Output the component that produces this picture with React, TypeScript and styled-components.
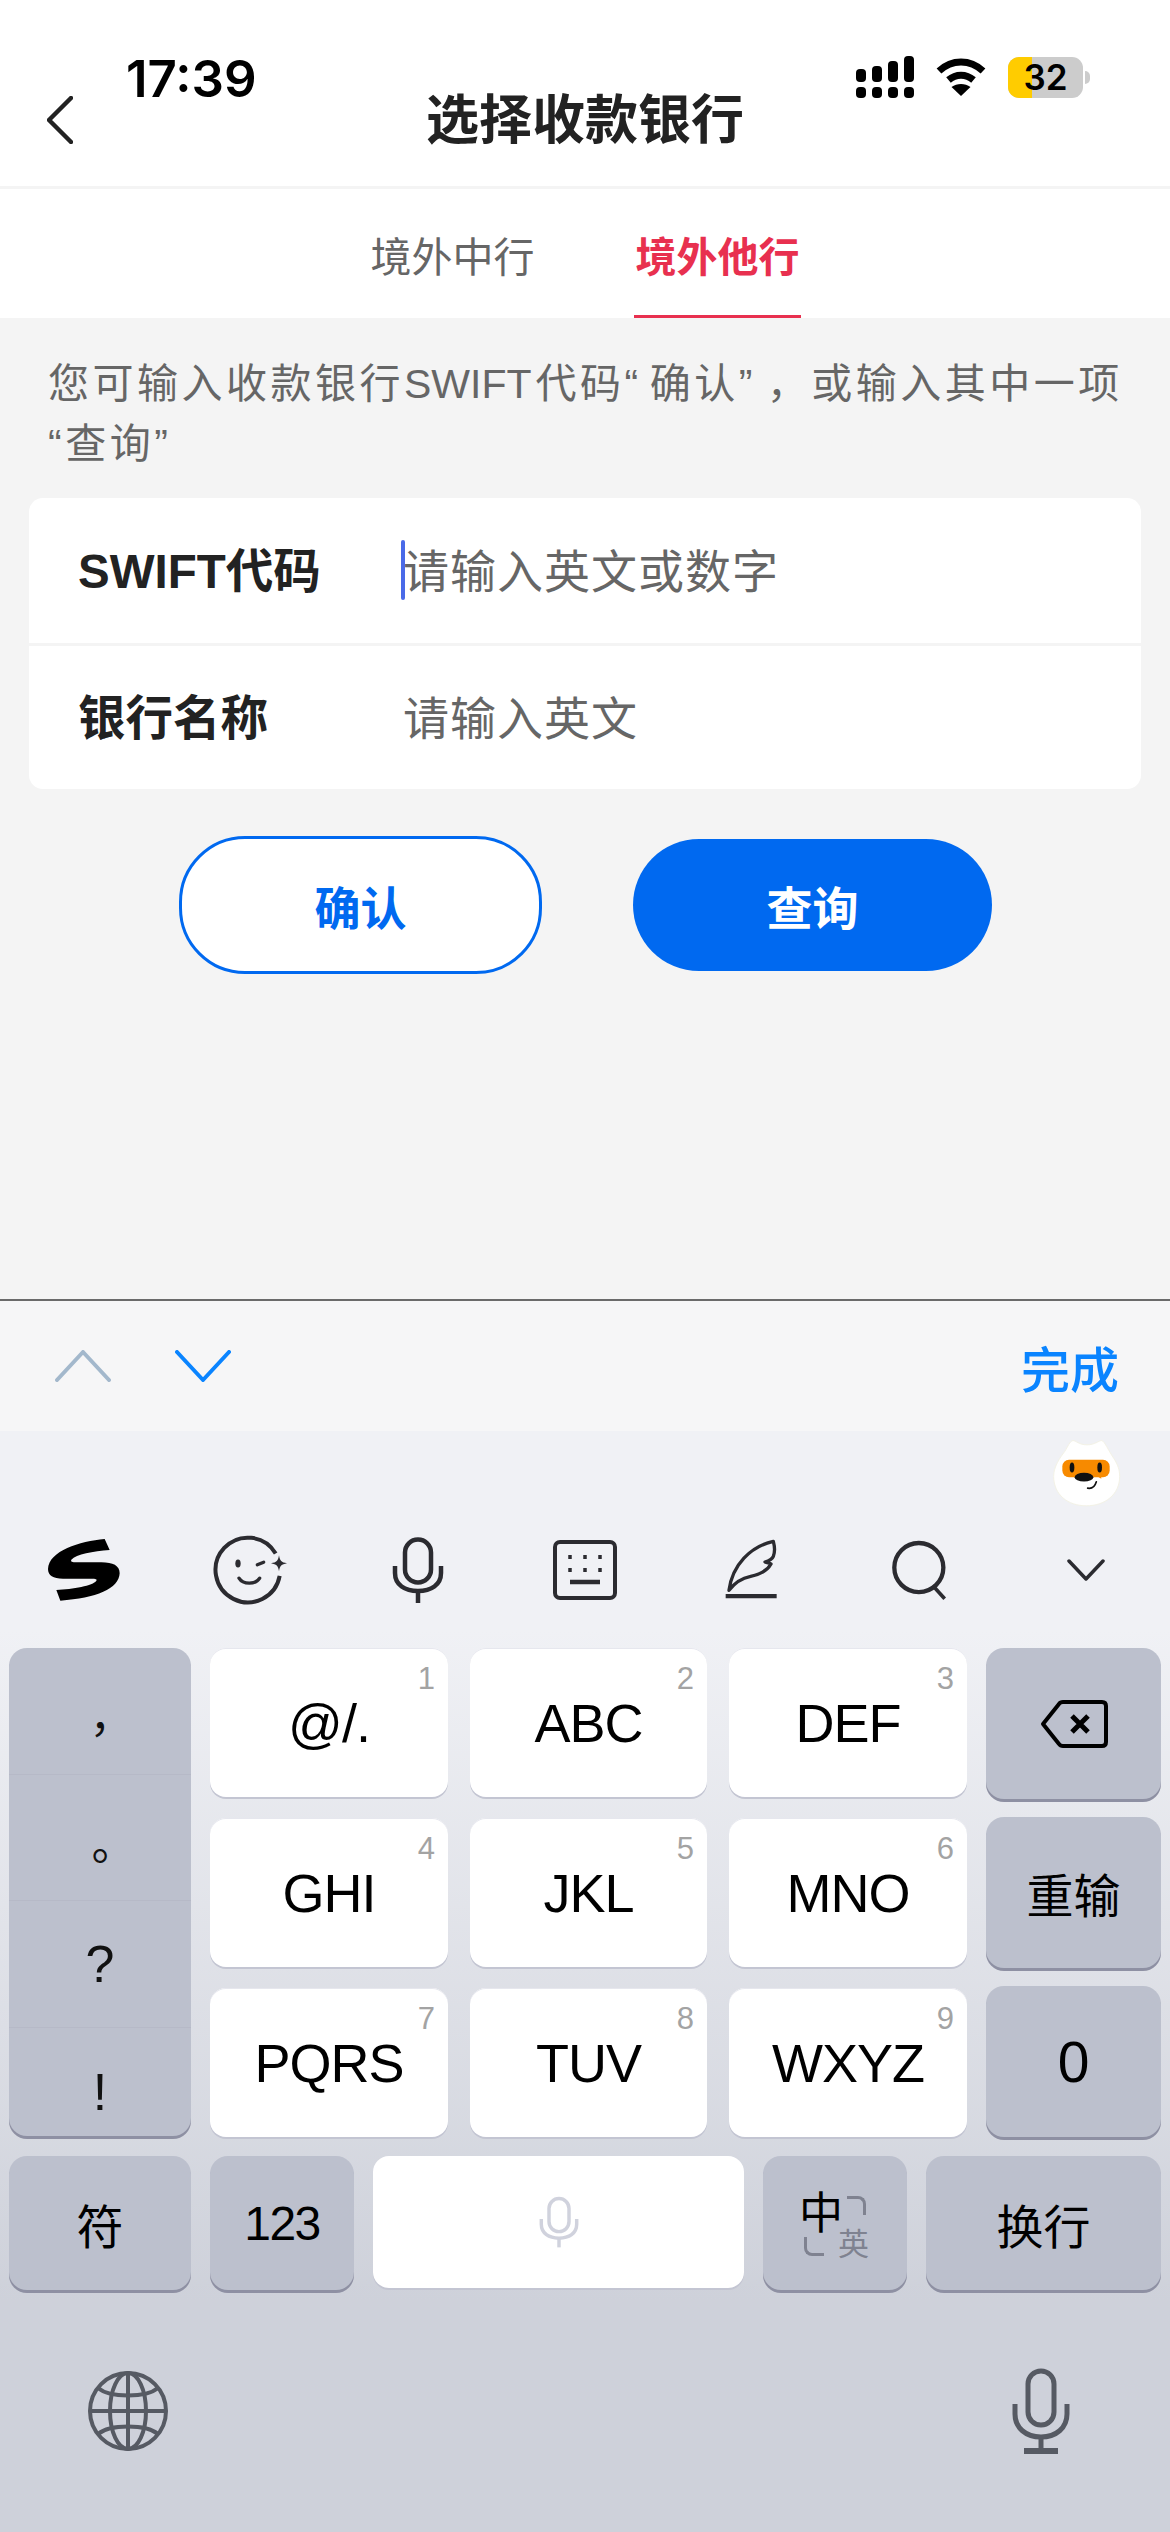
import styled, { createGlobalStyle } from 'styled-components';

const CJK = `"Noto Sans CJK SC", sans-serif`;
const LATIN = `"Liberation Sans", "Noto Sans CJK SC", sans-serif`;

const GlobalStyle = createGlobalStyle`
  html, body {
    margin: 0;
    padding: 0;
    background: #fff;
  }
`;

const StatusIcons = () => (
  <StatusRight>
    <svg width="58" height="42" viewBox="0 0 58 42" fill="#000">
      <rect x="0" y="31" width="10" height="11" rx="4" />
      <rect x="16" y="31" width="10" height="11" rx="4" />
      <rect x="32" y="31" width="10" height="11" rx="4" />
      <rect x="48" y="31" width="10" height="11" rx="4" />
      <rect x="0" y="13" width="10" height="13" rx="4" />
      <rect x="16" y="10" width="10" height="16" rx="4" />
      <rect x="32" y="5" width="10" height="21" rx="4" />
      <rect x="48" y="0" width="10" height="26" rx="4" />
    </svg>
    <svg width="50" height="40" viewBox="0 0 50 40">
      <path d="M3 14C16 2 34 2 47 14" fill="none" stroke="#000" strokeWidth="7" />
      <path d="M12.500 23C20 16.500 30 16.500 37.500 23" fill="none" stroke="#000" strokeWidth="7" />
      <path d="M25 39L15.500 30C21 26 29 26 34.500 30Z" fill="#000" />
    </svg>
    <Battery>
      <BatteryFill />
      <BatteryLevel>32</BatteryLevel>
      <BatteryNub />
    </Battery>
  </StatusRight>
);

const Chevron = ({ dir, color, w, h, stroke }: { dir: 'up' | 'down' | 'left'; color: string; w: number; h: number; stroke: number }) => {
  const d =
    dir === 'up'
      ? `M2 ${h - 2}L${w / 2} 2L${w - 2} ${h - 2}`
      : dir === 'down'
        ? `M2 2L${w / 2} ${h - 2}L${w - 2} 2`
        : `M${w - 2} 2L2 ${h / 2}L${w - 2} ${h - 2}`;
  return (
    <svg width={w} height={h} viewBox={`0 0 ${w} ${h}`}>
      <path d={d} fill="none" stroke={color} strokeWidth={stroke} strokeLinecap="round" strokeLinejoin="round" />
    </svg>
  );
};

const MicIcon = ({ color, w, h }: { color: string; w: number; h: number }) => (
  <svg width={w} height={h} viewBox="0 0 52 66" fill="none" stroke={color} strokeWidth="4.500">
    <rect x="13" y="2.500" width="26" height="43" rx="13" />
    <path d="M3 29V36C3 48 13 54 26 54C39 54 49 48 49 36V29" />
    <path d="M26 54V66" />
  </svg>
);

const Mascot = () => (
  <svg width="68" height="69" viewBox="40 25 204 206">
    <path d="M100 32C108 32 118 45 142 45C165 45 178 32 186 32C195 34 205 60 222 85C235 105 240 120 240 140C240 195 195 228 140 228C85 228 42 195 42 140C42 110 60 85 75 65C85 50 90 34 100 32Z" fill="#fff" stroke="#f3f2e6" strokeWidth="3" />
    <rect x="68" y="90" width="142" height="52" rx="20" fill="#f78a00" />
    <path d="M165 135L185 147L183 125Z" fill="#f78a00" />
    <ellipse cx="97" cy="113" rx="7" ry="15" fill="#111" />
    <ellipse cx="180" cy="113" rx="7" ry="15" fill="#111" />
    <ellipse cx="133" cy="142" rx="28" ry="13" fill="#111" />
    <path d="M144 175C156 177 166 170 170 156" fill="none" stroke="#111" strokeWidth="5" strokeLinecap="round" />
  </svg>
);

const tools = [
  <svg key="s" width="72" height="62" viewBox="55 55 216 186">
    <path d="M225 55L240 88C190 92 140 100 125 117C122 123 128 125 140 125H215C250 125 270 135 270 158C268 205 200 232 92 240L80 208C130 205 190 195 200 180C203 175 198 174 185 174H100C70 174 55 165 55 145C58 90 150 62 225 55Z" fill="#000" />
  </svg>,
  <svg key="smile" width="75" height="72" viewBox="550 40 225 215" fill="none" stroke="#2b2b30" strokeWidth="12">
    <path d="M738 98A97 97 0 1 0 750 165" />
    <ellipse cx="625" cy="128" rx="8" ry="12" fill="#2b2b30" stroke="none" />
    <path d="M683 132L702 124" strokeWidth="10" strokeLinecap="round" />
    <path d="M628 172C640 192 678 192 690 172" strokeWidth="10" strokeLinecap="round" />
    <path d="M748 103C751 120 755 124 772 127C755 130 751 134 748 151C745 134 741 130 724 127C741 124 745 120 748 103Z" fill="#2b2b30" stroke="none" />
  </svg>,
  <MicIcon key="mic" color="#2b2b30" w={52} h={66} />,
  <svg key="kb" width="64" height="60" viewBox="0 0 64 60" fill="none" stroke="#2b2b30">
    <rect x="2" y="2" width="60" height="56" rx="5" strokeWidth="4" />
    <path d="M17 15V19M32 15V19M47 15V19M17 28V32M32 28V32M47 28V32" strokeWidth="3.500" />
    <path d="M17 42H47" strokeWidth="4.500" />
  </svg>,
  <svg key="pen" width="55" height="65" viewBox="70 50 165 195" fill="none" stroke="#2b2b30">
    <path d="M85 207C95 130 150 75 218 60C222 75 224 90 218 105C214 115 205 118 193 122C200 125 208 125 211 128C200 148 175 160 150 165C125 170 105 180 85 207Z" strokeWidth="10" strokeLinejoin="round" />
    <path d="M75 224.500H228" strokeWidth="13" />
  </svg>,
  <svg key="search" width="58" height="63" viewBox="565 50 175 190" fill="none" stroke="#2b2b30" strokeWidth="13">
    <circle cx="652" cy="136" r="74" />
    <path d="M700 197L730 230" strokeWidth="11" />
  </svg>,
  <Chevron key="down" dir="down" color="#2b2b30" w={38} h={22} stroke={3.500} />,
];

const t9 = [
  ['@/.', '1'],
  ['ABC', '2'],
  ['DEF', '3'],
  ['GHI', '4'],
  ['JKL', '5'],
  ['MNO', '6'],
  ['PQRS', '7'],
  ['TUV', '8'],
  ['WXYZ', '9'],
];

export default function App() {
  return (
    <Page>
      <GlobalStyle />
      <Header>
        <Time>17:39</Time>
        <StatusIcons />
        <BackButton>
          <Chevron dir="left" color="#222" w={26} h={48} stroke={4.500} />
        </BackButton>
        <Title>选择收款银行</Title>
      </Header>
      <Tabs>
        <Tab>境外中行</Tab>
        <Tab $active>境外他行</Tab>
      </Tabs>
      <Content>
        <Hint>
          您可输入收款银行<HintCode>SWIFT</HintCode>代码<HintQuote $after={8}>“</HintQuote>确认<HintQuote $after={11}>”</HintQuote>，或输入其中一项
          <br />
          “查询”
        </Hint>
        <FormCard>
          <FormRow>
            <FieldLabel>SWIFT代码</FieldLabel>
            <Placeholder $focused>请输入英文或数字</Placeholder>
          </FormRow>
          <FormRow>
            <FieldLabel>银行名称</FieldLabel>
            <Placeholder>请输入英文</Placeholder>
          </FormRow>
        </FormCard>
        <Actions>
          <OutlineButton>确认</OutlineButton>
          <SolidButton>查询</SolidButton>
        </Actions>
      </Content>
      <Toolbar>
        <Arrows>
          <Chevron dir="up" color="#a3b8cc" w={56} h={32} stroke={4} />
          <Chevron dir="down" color="#0a84ff" w={56} h={32} stroke={4} />
        </Arrows>
        <Done>完成</Done>
      </Toolbar>
      <Keyboard>
        <MascotRow>
          <Mascot />
        </MascotRow>
        <ToolRow>
          {tools.map((icon, i) => (
            <ToolCell key={i}>{icon}</ToolCell>
          ))}
        </ToolRow>
        <KeyBlock>
          <SymbolKey>
            <SymbolCell $top={32}>，</SymbolCell>
            <SymbolCell $top={32}>。</SymbolCell>
            <SymbolCell $latin>?</SymbolCell>
            <SymbolCell $latin $last $top={20}>!</SymbolCell>
          </SymbolKey>
          <LetterGrid>
            {t9.map(([label, digit]) => (
              <LetterKey key={digit}>
                {label}
                <Digit>{digit}</Digit>
              </LetterKey>
            ))}
          </LetterGrid>
          <ActionColumn>
            <GreyKey>
              <svg width="68" height="48" viewBox="0 0 68 48" fill="none" stroke="#000">
                <path d="M3 24L19 4C20 2.500 21 2 23 2H62C64.500 2 66 3.500 66 6V42C66 44.500 64.500 46 62 46H23C21 46 20 45.500 19 44Z" strokeWidth="4" strokeLinejoin="round" />
                <path d="M32 16L48 32M48 16L32 32" strokeWidth="5" />
              </svg>
            </GreyKey>
            <GreyKey $cjk>重输</GreyKey>
            <GreyKey $big>0</GreyKey>
          </ActionColumn>
        </KeyBlock>
        <BottomKeys>
          <GreyKey $w={182} $cjk>符</GreyKey>
          <NumberKey>123</NumberKey>
          <SpaceKey>
            <MicIcon color="#d0d2dd" w={40} h={52} />
          </SpaceKey>
          <LangKey>
            <LangMain>中</LangMain>
            <LangCornerTop />
            <LangCornerBottom />
            <LangAlt>英</LangAlt>
          </LangKey>
          <GreyKey $w={235} $cjk>换行</GreyKey>
        </BottomKeys>
        <SystemRow>
          <svg width="80" height="80" viewBox="0 0 80 80" fill="none" stroke="#565a63" strokeWidth="4">
            <circle cx="40" cy="40" r="38" />
            <ellipse cx="40" cy="40" rx="18" ry="38" />
            <path d="M40 2V78M2 40H78" />
            <path d="M10 17C22 27 58 27 70 17M10 63C22 53 58 53 70 63" />
          </svg>
          <svg width="58" height="86" viewBox="0 0 58 86" fill="none" stroke="#565a63" strokeWidth="5">
            <rect x="16" y="3" width="26" height="54" rx="13" />
            <path d="M3 36V46C3 60 14 69 29 69C44 69 55 60 55 46V36" />
            <path d="M29 69V82" />
            <path d="M12 83H46" strokeWidth="6" />
          </svg>
        </SystemRow>
      </Keyboard>
    </Page>
  );
}

const Page = styled.div`
  width: 1170px;
  height: 2532px;
  display: flex;
  flex-direction: column;
  overflow: hidden;
  background: #f4f4f4;
  font-family: ${CJK};
`;

const Header = styled.header`
  position: relative;
  height: 186px;
  flex-shrink: 0;
  background: #fff;
  display: flex;
  align-items: flex-start;
  justify-content: center;
  padding-top: 77px;
  box-sizing: border-box;
`;

const Time = styled.div`
  position: absolute;
  left: 126px;
  top: 47px;
  font-family: Inter, ${LATIN};
  font-size: 51px;
  line-height: 64px;
  font-weight: 600;
  color: #000;
`;

const StatusRight = styled.div`
  position: absolute;
  left: 856px;
  top: 56px;
  display: flex;
  align-items: center;
  gap: 22px;
`;

const Battery = styled.div`
  position: relative;
  width: 75px;
  height: 41px;
  border-radius: 11px;
  background: #cccccc;
  display: flex;
  align-items: center;
  justify-content: center;
`;

const BatteryFill = styled.div`
  position: absolute;
  left: 0;
  top: 0;
  bottom: 0;
  width: 24px;
  background: #ffcc00;
  border-radius: 11px 0 0 11px;
`;

const BatteryLevel = styled.span`
  position: relative;
  font-family: Inter, ${LATIN};
  font-size: 35px;
  font-weight: 600;
  color: #000;
`;

const BatteryNub = styled.div`
  position: absolute;
  right: -7px;
  top: 14px;
  width: 5px;
  height: 13px;
  border-radius: 0 6px 6px 0;
  background: #cccccc;
`;

const BackButton = styled.div`
  position: absolute;
  left: 47px;
  top: 96px;
`;

const Title = styled.h1`
  margin: 0;
  font-size: 53px;
  line-height: 78px;
  font-weight: 700;
  color: #222;
`;

const Tabs = styled.nav`
  margin-top: 3px;
  height: 129px;
  flex-shrink: 0;
  background: #fff;
  display: flex;
  justify-content: center;
  gap: 98px;
`;

const Tab = styled.div<{ $active?: boolean }>`
  height: 129px;
  box-sizing: border-box;
  width: 167px;
  text-align: center;
  line-height: 130px;
  font-size: 41px;
  font-weight: ${(p) => (p.$active ? 700 : 400)};
  color: ${(p) => (p.$active ? '#e8304f' : '#666')};
  border-bottom: 3px solid ${(p) => (p.$active ? '#e8304f' : 'transparent')};
`;

const Content = styled.main`
  flex: 1;
  min-height: 0;
  padding: 36px 29px 0;
`;

const Hint = styled.p`
  margin: 0 0 24px;
  padding: 0 10px 0 19px;
  font-family: ${LATIN};
  font-size: 41px;
  line-height: 60px;
  letter-spacing: 3.5px;
  color: #666;
`;

const HintCode = styled.span`
  letter-spacing: 0;
  margin-right: 4px;
`;

const HintQuote = styled.span<{ $after: number }>`
  margin-right: ${(p) => p.$after}px;
`;

const FormCard = styled.section`
  background: #fff;
  border-radius: 14px;
  overflow: hidden;
`;

const FormRow = styled.div`
  height: 145px;
  display: flex;
  align-items: center;
  padding: 0 0 6px 49px;
  box-sizing: border-box;
  & + & {
    height: 146px;
    border-top: 3px solid #f4f4f4;
  }
`;

const FieldLabel = styled.div`
  width: 325px;
  font-family: ${LATIN};
  font-size: 47.5px;
  font-weight: 700;
  color: #222;
`;

const Placeholder = styled.div<{ $focused?: boolean }>`
  position: relative;
  font-size: 46px;
  letter-spacing: 1px;
  color: #666;
  &::before {
    content: '';
    display: ${(p) => (p.$focused ? 'block' : 'none')};
    position: absolute;
    left: -2px;
    top: 5px;
    width: 4px;
    height: 60px;
    border-radius: 2px;
    background: #4a6ae8;
  }
`;

const Actions = styled.div`
  margin-top: 47px;
  display: flex;
  align-items: center;
  gap: 91px;
  padding-left: 150px;
`;

const OutlineButton = styled.button`
  width: 363px;
  height: 138px;
  padding: 0;
  border: 3px solid #0069f0;
  border-radius: 66px;
  background: #fff;
  color: #0069f0;
  font-family: ${CJK};
  font-size: 46px;
  font-weight: 700;
`;

const SolidButton = styled.button`
  width: 359px;
  height: 132px;
  padding: 0;
  border: 0;
  border-radius: 66px;
  background: #0069f0;
  color: #fff;
  font-family: ${CJK};
  font-size: 46px;
  font-weight: 700;
`;

const Toolbar = styled.div`
  height: 132px;
  flex-shrink: 0;
  box-sizing: border-box;
  border-top: 2px solid #6a6a6a;
  background: #f6f6f7;
  display: flex;
  align-items: center;
  justify-content: space-between;
  padding: 0 51px 0 55px;
`;

const Arrows = styled.div`
  display: flex;
  gap: 64px;
`;

const Done = styled.div`
  font-size: 49px;
  font-weight: 500;
  color: #0a84ff;
`;

const Keyboard = styled.div`
  height: 1101px;
  flex-shrink: 0;
  display: flex;
  flex-direction: column;
  background: linear-gradient(to bottom, #f0f1f5 0, #f0f1f5 200px, #ced1da 870px);
`;

const MascotRow = styled.div`
  height: 78px;
  padding: 7px 49px 0 0;
  box-sizing: border-box;
  display: flex;
  justify-content: flex-end;
`;

const ToolRow = styled.div`
  height: 139px;
  display: grid;
  grid-template-columns: repeat(7, 167px);
`;

const ToolCell = styled.div`
  display: flex;
  justify-content: center;
  align-items: center;
  height: 70px;
  padding-top: 26px;
`;

const KeyBlock = styled.div`
  display: flex;
  gap: 19px;
  padding-left: 9px;
`;

const SymbolKey = styled.div`
  width: 182px;
  height: 488px;
  border-radius: 18px;
  background: #bcc0cd;
  box-shadow: 0 3px 0 #8e90a3;
  display: grid;
  grid-template-rows: 127px 126px 127px 108px;
`;

const SymbolCell = styled.div<{ $top?: number; $latin?: boolean; $last?: boolean }>`
  display: flex;
  align-items: center;
  justify-content: center;
  box-sizing: border-box;
  padding-top: ${(p) => p.$top ?? 0}px;
  font-family: ${(p) => (p.$latin ? LATIN : `"Noto Sans CJK TC", sans-serif`)};
  font-size: ${(p) => (p.$latin ? 52 : 44)}px;
  color: #111;
  border-bottom: ${(p) => (p.$last ? '0' : '1px solid #b6b9c7')};
`;

const LetterGrid = styled.div`
  width: 757px;
  display: grid;
  grid-template-columns: 238px 237px 238px;
  grid-auto-rows: 149px;
  column-gap: 22px;
  row-gap: 21px;
`;

const LetterKey = styled.div`
  position: relative;
  border-radius: 16px;
  background: #fff;
  box-shadow: 0 2px 0 #c3c5d2, inset 0 1px 0 #e6e7ee;
  display: flex;
  align-items: center;
  justify-content: center;
  font-family: ${LATIN};
  font-size: 54px;
  letter-spacing: -1px;
  color: #000;
`;

const Digit = styled.span`
  position: absolute;
  right: 13px;
  top: 13px;
  font-size: 31px;
  line-height: 36px;
  letter-spacing: 0;
  color: #a3a3a3;
`;

const ActionColumn = styled.div`
  width: 175px;
  display: flex;
  flex-direction: column;
  gap: 18px;
`;

const GreyKey = styled.div<{ $w?: number; $cjk?: boolean; $big?: boolean }>`
  width: ${(p) => (p.$w ? `${p.$w}px` : 'auto')};
  flex: ${(p) => (p.$w ? '0 0 auto' : '1 1 0')};
  min-height: 151px;
  border-radius: 18px;
  background: #bcc0cd;
  box-shadow: 0 3px 0 #8e90a3;
  display: flex;
  align-items: center;
  justify-content: center;
  font-family: ${(p) => (p.$cjk ? CJK : LATIN)};
  font-size: ${(p) => (p.$cjk ? 47 : p.$big ? 57 : 52)}px;
  color: #000;
`;

const NumberKey = styled.div`
  width: 144px;
  border-radius: 18px;
  background: #bcc0cd;
  box-shadow: 0 3px 0 #8e90a3;
  display: flex;
  align-items: center;
  justify-content: center;
  font-family: ${LATIN};
  font-size: 48px;
  letter-spacing: -1.5px;
  color: #000;
`;

const BottomKeys = styled.div`
  margin-top: 19px;
  display: flex;
  gap: 19px;
  padding-left: 9px;
  height: 134px;
  & > ${GreyKey} {
    min-height: 0;
  }
`;

const SpaceKey = styled.div`
  width: 371px;
  height: 132px;
  border-radius: 16px;
  background: #fff;
  box-shadow: 0 2px 0 #c3c5d2;
  display: flex;
  align-items: center;
  justify-content: center;
`;

const LangKey = styled.div`
  position: relative;
  width: 144px;
  border-radius: 18px;
  background: #bcc0cd;
  box-shadow: 0 3px 0 #8e90a3;
`;

const LangMain = styled.span`
  position: absolute;
  left: 36px;
  top: 26px;
  font-size: 44px;
  line-height: 56px;
  color: #000;
`;

const LangAlt = styled.span`
  position: absolute;
  left: 75px;
  top: 68px;
  font-size: 31px;
  line-height: 36px;
  color: #7f8290;
`;

const LangCornerTop = styled.span`
  position: absolute;
  left: 84px;
  top: 40px;
  width: 19px;
  height: 19px;
  border-top: 3px solid #7f8290;
  border-right: 3px solid #7f8290;
  border-top-right-radius: 8px;
  box-sizing: border-box;
`;

const LangCornerBottom = styled.span`
  position: absolute;
  left: 41px;
  top: 81px;
  width: 20px;
  height: 19px;
  border-bottom: 3px solid #7f8290;
  border-left: 3px solid #7f8290;
  border-bottom-left-radius: 8px;
  box-sizing: border-box;
`;

const SystemRow = styled.div`
  margin-top: 78px;
  display: flex;
  align-items: center;
  justify-content: space-between;
  padding: 0 100px 0 88px;
`;
